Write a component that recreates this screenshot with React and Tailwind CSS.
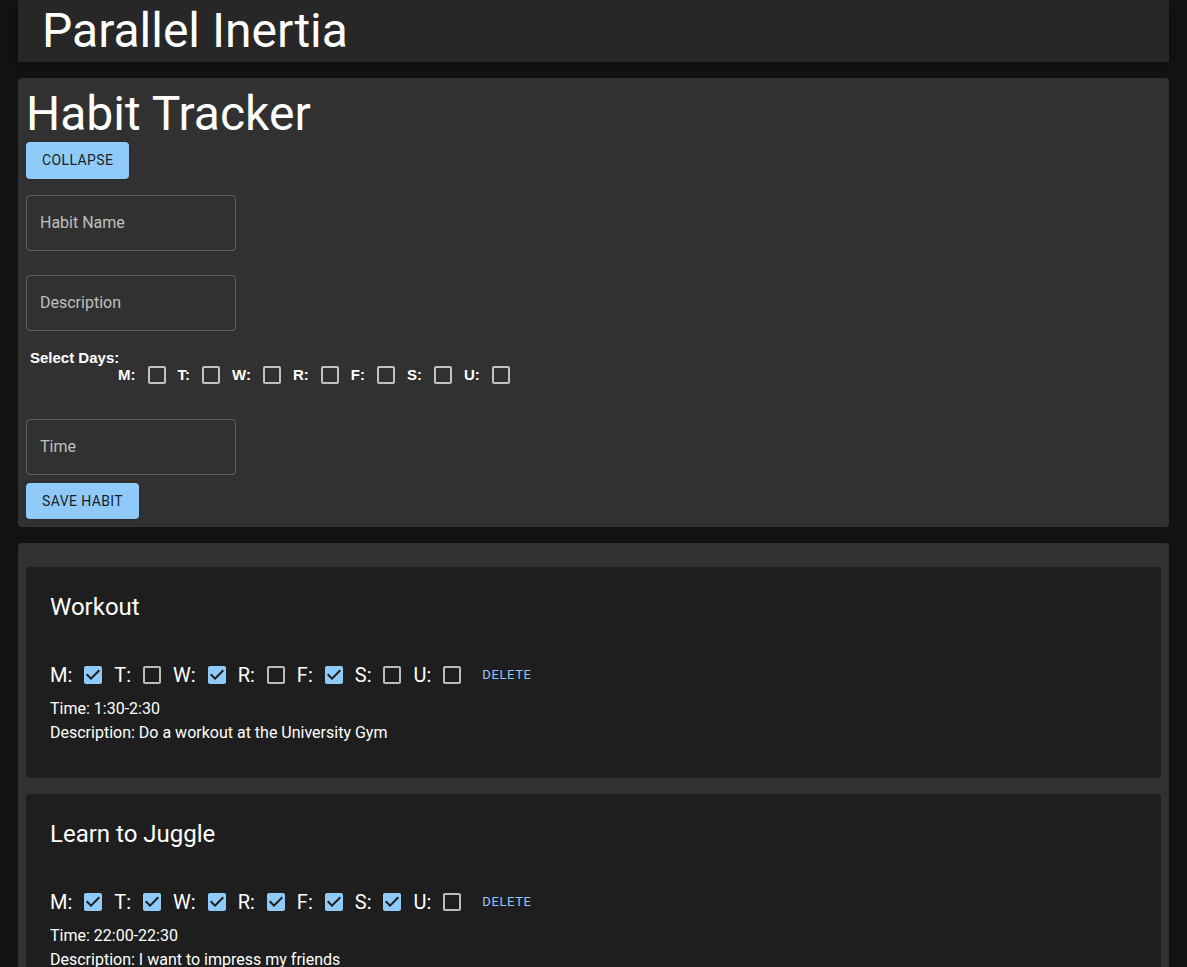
import React from 'react';

const DAYS = ['M', 'T', 'W', 'R', 'F', 'S', 'U'];

const habits = [
  { name: 'Workout', days: [true, false, true, false, true, false, false], time: '1:30-2:30', description: 'Do a workout at the University Gym' },
  { name: 'Learn to Juggle', days: [true, true, true, true, true, true, false], time: '22:00-22:30', description: 'I want to impress my friends' },
];

function CheckIcon({ checked }) {
  // MUI CheckBox / CheckBoxOutlineBlank glyphs
  return (
    <span className="inline-flex px-[9px]">
      <svg width="24" height="24" viewBox="0 0 24 24">
        {checked ? (
          <path
            fill="#90caf9"
            d="M19 3H5c-1.11 0-2 .9-2 2v14c0 1.1.89 2 2 2h14c1.11 0 2-.9 2-2V5c0-1.1-.89-2-2-2zm-9 14l-5-5 1.41-1.41L10 14.17l7.59-7.59L19 8l-9 9z"
          />
        ) : (
          <path
            fill="rgba(255,255,255,0.7)"
            d="M19 5v14H5V5h14m0-2H5c-1.1 0-2 .9-2 2v14c0 1.1.9 2 2 2h14c1.1 0 2-.9 2-2V5c0-1.1-.9-2-2-2z"
          />
        )}
      </svg>
    </span>
  );
}

function Field({ label }) {
  return (
    <div className="w-[210px] h-[56px] rounded-[4px] border border-[rgba(255,255,255,0.23)] flex items-center px-[13px] text-[16px] text-[rgba(255,255,255,0.7)]">
      {label}
    </div>
  );
}

function HabitCard({ habit }) {
  return (
    <div className="bg-[#1e1e1e] rounded-[4px] px-6 pt-6 pb-[33px] text-white">
      <div className="text-[24px] leading-[32px]">{habit.name}</div>
      <div className="flex items-center mt-[37px] h-[30px] text-[20px]">
        {DAYS.map((d, i) => (
          <React.Fragment key={d}>
            <span>{d}:</span>
            <CheckIcon checked={habit.days[i]} />
          </React.Fragment>
        ))}
        <button className="ml-[4px] px-[5px] py-[4px] text-[13px] tracking-[0.6px] text-[#90caf9] uppercase">
          Delete
        </button>
      </div>
      <div className="text-[16px] leading-[24px] mt-[7px]">Time: {habit.time}</div>
      <div className="text-[16px] leading-[24px]">Description: {habit.description}</div>
    </div>
  );
}

export default function App() {
  return (
    <div className="min-h-screen bg-[#121212] px-[18px] pb-6 font-['Roboto',sans-serif] text-white">
      <header className="h-[62px] bg-[#272727] flex items-center px-6 shadow-md">
        <h1 className="text-[48px] leading-none">Parallel Inertia</h1>
      </header>

      <section className="mt-4 bg-[#313131] rounded-[4px] p-2">
        <h2 className="text-[48px] leading-[56px]">Habit Tracker</h2>
        <button className="h-[37px] px-4 rounded-[4px] bg-[#90caf9] text-[rgba(0,0,0,0.87)] text-[14px] tracking-[0.4px] uppercase shadow">
          Collapse
        </button>
        <div className="mt-4">
          <Field label="Habit Name" />
        </div>
        <div className="mt-6">
          <Field label="Description" />
        </div>
        <div className="mt-[18px] pl-1 font-['Liberation_Sans',sans-serif] font-bold text-[15px]">
          <div className="leading-[17px]">Select Days:</div>
          <div className="flex items-center pl-[88px] h-[18px]">
            {DAYS.map((d) => (
              <React.Fragment key={d}>
                <span>{d}:</span>
                <CheckIcon checked={false} />
              </React.Fragment>
            ))}
          </div>
        </div>
        <div className="mt-[35px]">
          <Field label="Time" />
        </div>
        <button className="mt-2 h-[36px] px-4 rounded-[4px] bg-[#90caf9] text-[rgba(0,0,0,0.87)] text-[14px] tracking-[0.4px] uppercase shadow">
          Save Habit
        </button>
      </section>

      <section className="mt-4 bg-[#313131] rounded-[4px] px-2 pt-6 pb-4 flex flex-col gap-4">
        {habits.map((h) => (
          <HabitCard key={h.name} habit={h} />
        ))}
      </section>
    </div>
  );
}
